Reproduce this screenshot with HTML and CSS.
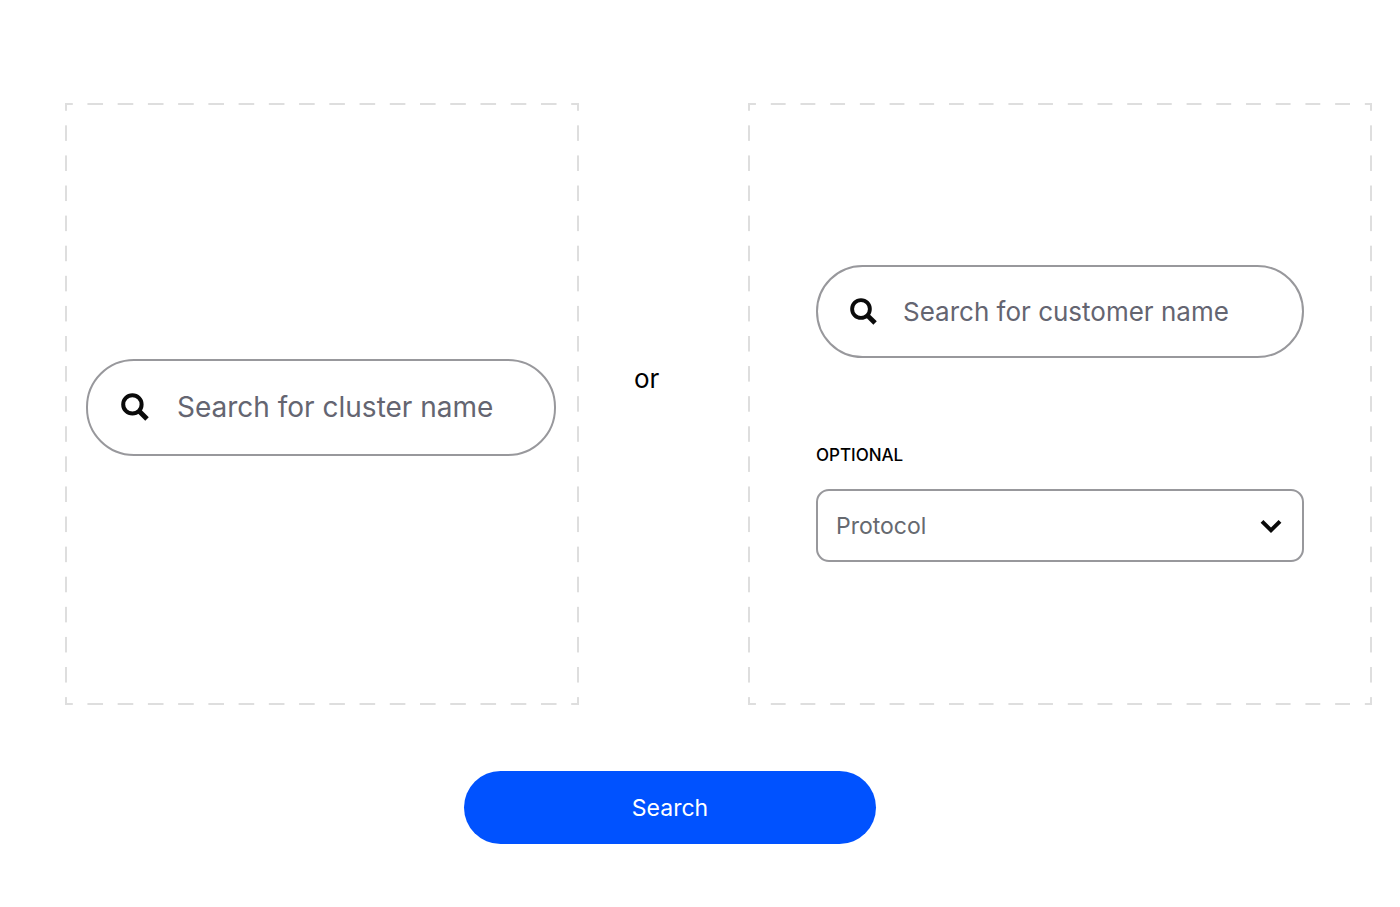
FILE: index.html
```html
<!DOCTYPE html>
<html lang="en">
<head>
<meta charset="utf-8">
<meta name="viewport" content="width=device-width, initial-scale=1">
<title>Search</title>
<link rel="stylesheet" href="styles.css">
</head>
<body>
<form class="page">
  <div class="options">
    <section class="panel panel-cluster">
      <label class="search search-large">
        <svg class="search-icon" viewBox="0 0 28 28" aria-hidden="true"><circle cx="11.4" cy="11.4" r="9.2"/><path d="M18 18l8 8"/></svg>
        <input class="search-input" type="text" placeholder="Search for cluster name" aria-label="Search for cluster name">
      </label>
    </section>
    <p class="separator">or</p>
    <section class="panel panel-customer">
      <label class="search">
        <svg class="search-icon" viewBox="0 0 28 28" aria-hidden="true"><circle cx="11.4" cy="11.4" r="9.2"/><path d="M18 18l8 8"/></svg>
        <input class="search-input" type="text" placeholder="Search for customer name" aria-label="Search for customer name">
      </label>
      <label class="select-label" for="protocol">OPTIONAL</label>
      <div class="select-wrap">
        <select class="select" id="protocol"><option>Protocol</option></select>
        <svg class="chevron" viewBox="0 0 22 14" aria-hidden="true"><path d="M2 2.4l9 8.8 9-8.8"/></svg>
      </div>
    </section>
  </div>
  <div class="actions"><button class="submit" type="submit">Search</button></div>
</form>
</body>
</html>
```
FILE: styles.css
```css
* { box-sizing: border-box; }

body {
  margin: 0;
  background: #fff;
  color: #000;
  font-family: Inter, "Liberation Sans", sans-serif;
}

.page { padding: 103px 28px 63px 65px; }

.options {
  display: grid;
  grid-template-columns: minmax(0, 514fr) 169px minmax(0, 624fr);
}

/* Long dashes with a half dash meeting at each corner */
.panel {
  --dash: #dedede 25%, transparent 25% 75%, #dedede 75%;
  background:
    linear-gradient(90deg, var(--dash)) 0 0 / 30px 2px round no-repeat,
    linear-gradient(90deg, var(--dash)) 0 100% / 30px 2px round no-repeat,
    linear-gradient(var(--dash)) 0 0 / 2px 30px no-repeat round,
    linear-gradient(var(--dash)) 100% 0 / 2px 30px no-repeat round;
}

.panel-cluster {
  display: flex;
  align-items: center;
  padding: 6px 23px 0 21px;
}

.panel-customer {
  display: flex;
  flex-direction: column;
  padding: 162px 68px 143px;
}

.separator {
  align-self: center;
  margin: 0;
  padding: 0 0 50px 55px;
  font-size: 26px;
  line-height: 32px;
}

.search {
  display: flex;
  align-items: center;
  gap: 26px;
  width: 100%;
  height: 93px;
  padding: 0 32px;
  border: 2px solid #98989c;
  border-radius: 48px;
  font-size: 26px;
}

.search-large {
  height: 97px;
  gap: 28px;
  padding: 0 33px;
  font-size: 28px;
}

.search-icon {
  flex: none;
  width: 27px;
  height: 27px;
  fill: none;
  stroke: #0a0a0a;
  stroke-width: 4;
}

.search-icon path {
  stroke-width: 5;
}

.search-large .search-icon {
  width: 28px;
  height: 28px;
}

.search-input {
  flex: 1;
  min-width: 0;
  padding: 0;
  border: 0;
  outline: 0;
  background: none;
  color: #000;
  font: inherit;
}

.search-input::placeholder {
  color: #646571;
  opacity: 1;
}

.select-label {
  margin: 87px 0 24px;
  font-size: 17px;
  font-weight: 500;
  line-height: 20px;
}

.select-wrap { position: relative; }

.select {
  display: block;
  width: 100%;
  height: 73px;
  padding: 0 60px 0 18px;
  border: 2px solid #98989c;
  border-radius: 13px;
  appearance: none;
  background: #fff;
  color: #66696f;
  font: inherit;
  font-size: 23px;
}

.chevron {
  position: absolute;
  top: 30px;
  right: 22px;
  width: 22px;
  height: 14px;
  fill: none;
  stroke: #0a0a0a;
  stroke-width: 4;
  pointer-events: none;
}

.actions {
  display: flex;
  justify-content: center;
  padding: 66px 97px 0 0;
}

.submit {
  width: 412px;
  height: 73px;
  padding: 0;
  border: 0;
  border-radius: 37px;
  background: #0052ff;
  color: #fff;
  font: inherit;
  font-size: 23px;
}
```
